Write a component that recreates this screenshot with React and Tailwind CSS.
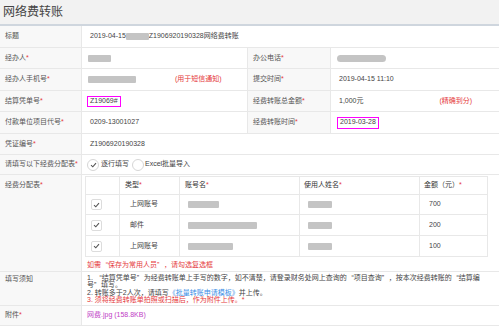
import React from "react";

const font = "font-['Liberation_Sans','Noto_Sans_CJK_SC',sans-serif]";

function Star() {
  return <span className="text-[#e5393b]">*</span>;
}

// full-width quote marks
function LQ() {
  return <span className="inline-block w-[7px] text-right">“</span>;
}
function RQ() {
  return <span className="inline-block w-[7px] text-left">”</span>;
}

function Label({ children, req, left }) {
  return (
    <div
      className={`${left ? "w-[82px]" : "w-[84px] border-l"} shrink-0 self-stretch bg-[#f8f8f8] border-r border-[#e8e8e8] pl-[5px] flex items-center text-[#555]`}
    >
      {children}
      {req && <Star />}
    </div>
  );
}

function Blur({ w }) {
  return <span className={`inline-block h-[7px] bg-[#c4c4c4] rounded-[1px] blur-[0.4px] ${w}`} />;
}

function Row({ h, children }) {
  return (
    <div className={`flex items-stretch border-b border-[#e8e8e8] ${h}`}>{children}</div>
  );
}

function Check() {
  return (
    <span className="w-[11px] h-[11px] border border-[#dcdcdc] rounded-[2px] bg-white flex items-center justify-center">
      <svg width="7" height="6" viewBox="0 0 7 6">
        <path d="M1 3.2 L2.8 4.8 L6 1.2" stroke="#555" strokeWidth="1.1" fill="none" />
      </svg>
    </span>
  );
}

function Radio({ checked }) {
  return (
    <span className="w-[12px] h-[12px] border border-[#d6d6d6] rounded-full bg-white flex items-center justify-center">
      {checked && (
        <svg width="7" height="6" viewBox="0 0 7 6">
          <path d="M1 3.2 L2.8 4.8 L6 1.2" stroke="#555" strokeWidth="1.1" fill="none" />
        </svg>
      )}
    </span>
  );
}

const items = [
  { type: "上网账号", acc: "w-[31px]", amt: "700" },
  { type: "邮件", acc: "w-[69px]", amt: "200" },
  { type: "上网账号", acc: "w-[45px]", amt: "100" },
];

export default function App() {
  return (
    <div className={`${font} w-[499px] h-[326px] overflow-hidden bg-white text-[7px] text-[#444]`}>
      <div className="h-[26px] bg-[#f2f2f2] border-b-2 border-[#cfd6de] flex items-center pl-[3px]">
        <span className="text-[12px] text-[#444]">网络费转账</span>
      </div>

      <Row h="h-[22px]">
        <Label left>标题</Label>
        <div className="flex-1 flex items-center pl-[8px]">
          2019-04-15<Blur w="w-[23px]" />Z1906920190328网络费转账
        </div>
      </Row>

      <Row h="h-[21px]">
        <Label left req>经办人</Label>
        <div className="w-[165px] flex items-center pl-[6px]">
          <Blur w="w-[23px]" />
        </div>
        <Label req>办公电话</Label>
        <div className="flex-1 flex items-center pl-[6px]">
          <Blur w="w-[49px] rounded-full" />
        </div>
      </Row>

      <Row h="h-[22px]">
        <Label left req>经办人手机号</Label>
        <div className="w-[165px] flex items-center pl-[6px]">
          <Blur w="w-[48px]" />
          <span className="ml-[39px] text-[#e5393b]">(用于短信通知)</span>
        </div>
        <Label req>提交时间</Label>
        <div className="flex-1 flex items-center pl-[8px]">2019-04-15 11:10</div>
      </Row>

      <Row h="h-[21px]">
        <Label left req>结算凭单号</Label>
        <div className="w-[165px] flex items-center pl-[5px]">
          <span className="border border-[#f0f] px-[2px] h-[11px] flex items-center">Z19069#</span>
        </div>
        <Label req>经费转账总金额</Label>
        <div className="flex-1 flex items-center pl-[8px]">
          1,000元
          <span className="ml-[76px] text-[#e5393b]">(精确到分)</span>
        </div>
      </Row>

      <Row h="h-[22px]">
        <Label left req>付款单位项目代号</Label>
        <div className="w-[165px] flex items-center pl-[8px]">0209-13001027</div>
        <Label req>经费转账时间</Label>
        <div className="flex-1 flex items-center pl-[6px]">
          <span className="border border-[#f0f] px-[2px] h-[12px] flex items-center">2019-03-28</span>
        </div>
      </Row>

      <Row h="h-[21px]">
        <Label left req>凭证编号</Label>
        <div className="flex-1 flex items-center pl-[8px]">Z1906920190328</div>
      </Row>

      <Row h="h-[20px]">
        <Label left req>请填写以下经费分配表</Label>
        <div className="flex-1 flex items-center pl-[5px]">
          <Radio checked />
          <span className="ml-[2px]">逐行填写</span>
          <span className="ml-[3px]">
            <Radio />
          </span>
          <span className="ml-[1px]">Excel批量导入</span>
        </div>
      </Row>

      <Row h="h-[97px]">
        <div className="w-[82px] shrink-0 bg-[#f8f8f8] border-r border-[#e8e8e8] pl-[5px] pt-[5px] text-[#555]">
          经费分配表<Star />
        </div>
        <div className="flex-1 pl-[3px] pt-[1px]">
          <div className="w-[403px] border border-[#e8e8e8]">
            <div className="grid grid-cols-[34px_60px_120px_120px_68px] h-[18px] border-b border-[#e8e8e8] text-[#333]">
              <div className="border-r border-[#e8e8e8]" />
              <div className="border-r border-[#e8e8e8] pl-[5px] flex items-center">类型<Star /></div>
              <div className="border-r border-[#e8e8e8] pl-[5px] flex items-center">账号名<Star /></div>
              <div className="border-r border-[#e8e8e8] pl-[4px] flex items-center">使用人姓名<Star /></div>
              <div className="pl-[4px] flex items-center">金额（元）<Star /></div>
            </div>
            {items.map((it, i) => (
              <div
                key={i}
                className={`grid grid-cols-[34px_60px_120px_120px_68px] ${i === 1 ? "h-[21px]" : "h-[20px]"} ${i < 2 ? "border-b border-[#e8e8e8]" : ""}`}
              >
                <div className="border-r border-[#e8e8e8] pl-[5px] flex items-center">
                  <Check />
                </div>
                <div className="border-r border-[#e8e8e8] pl-[10px] flex items-center">{it.type}</div>
                <div className="border-r border-[#e8e8e8] pl-[8px] flex items-center">
                  <Blur w={it.acc} />
                </div>
                <div className="border-r border-[#e8e8e8] pl-[8px] flex items-center">
                  <Blur w="w-[24px]" />
                </div>
                <div className="pl-[9px] flex items-center">{it.amt}</div>
              </div>
            ))}
          </div>
          <div className="mt-[3px] pl-[2px] text-[#e5393b] leading-[9px]">
            如需<LQ />保存为常用人员<RQ />，请勾选复选框
          </div>
        </div>
      </Row>

      <Row h="h-[34px]">
        <div className="w-[82px] shrink-0 bg-[#f8f8f8] border-r border-[#e8e8e8] pl-[5px] pt-[2px] text-[#555]">
          填写须知
        </div>
        <div className="flex-1 pl-[5px] pt-[2px] leading-[7.4px] whitespace-nowrap">
          <div>
            1. <LQ />结算凭单号<RQ />为经费转账单上手写的数字，如不清楚，请登录财务处网上查询的<LQ />项目查询<RQ />，按本次经费转账的<LQ />结算编
          </div>
          <div>
            号<RQ />填写。
          </div>
          <div>
            2. 转账多于2人次，请填写<span className="text-[#3a8ee6]">《批量转账申请模板》</span>并上传。
          </div>
          <div className="text-[#e5393b]">3. 须将经费转账单拍照或扫描后，作为附件上传。*</div>
        </div>
      </Row>

      <Row h="h-[20px]">
        <Label left req>附件</Label>
        <div className="flex-1 flex items-center pl-[5px] text-[#c03dc6]">网费.jpg (158.8KB)</div>
      </Row>
    </div>
  );
}
